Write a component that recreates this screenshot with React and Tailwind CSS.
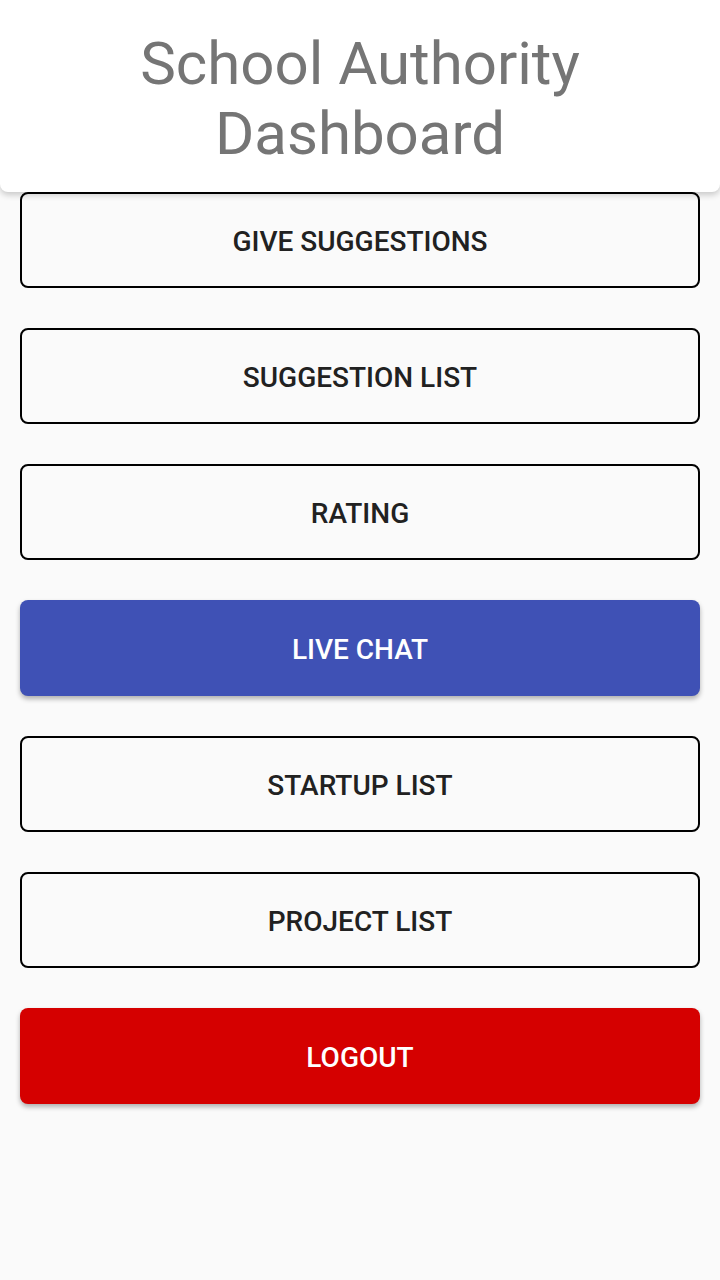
export default function App() {
  const items = [
    { label: "GIVE SUGGESTIONS", kind: "outline" },
    { label: "SUGGESTION LIST", kind: "outline" },
    { label: "RATING", kind: "outline" },
    { label: "LIVE CHAT", kind: "blue" },
    { label: "STARTUP LIST", kind: "outline" },
    { label: "PROJECT LIST", kind: "outline" },
    { label: "LOGOUT", kind: "red" },
  ];
  return (
    <div className="min-h-[1280px] w-[720px] bg-[#fafafa]" style={{ fontFamily: "Roboto, 'Liberation Sans', sans-serif" }}>
      <header className="relative z-10 flex h-[192px] flex-col items-center pt-[29px] rounded-b-[8px] bg-white text-center text-[60px] leading-[70px] text-[#757575] shadow-[0_3px_6px_rgba(0,0,0,0.2)]">
        <div>School Authority</div>
        <div>Dashboard</div>
      </header>
      <main className="flex flex-col gap-[40px] px-[20px]">
        {items.map((it) => (
          <button
            key={it.label}
            className={
              it.kind === "outline"
                ? "flex h-[96px] w-full items-center justify-center rounded-[8px] border-2 border-black bg-[#fafafa] pt-[4px] text-[28px] font-medium text-[#212121]"
                : it.kind === "blue"
                ? "flex h-[96px] w-full items-center justify-center rounded-[8px] bg-[#3f51b5] pt-[4px] text-[28px] font-medium text-white shadow-[0_3px_5px_rgba(0,0,0,0.3)]"
                : "flex h-[96px] w-full items-center justify-center rounded-[8px] bg-[#d50000] pt-[4px] text-[28px] font-medium text-white shadow-[0_3px_5px_rgba(0,0,0,0.3)]"
            }
          >
            {it.label}
          </button>
        ))}
      </main>
    </div>
  );
}
